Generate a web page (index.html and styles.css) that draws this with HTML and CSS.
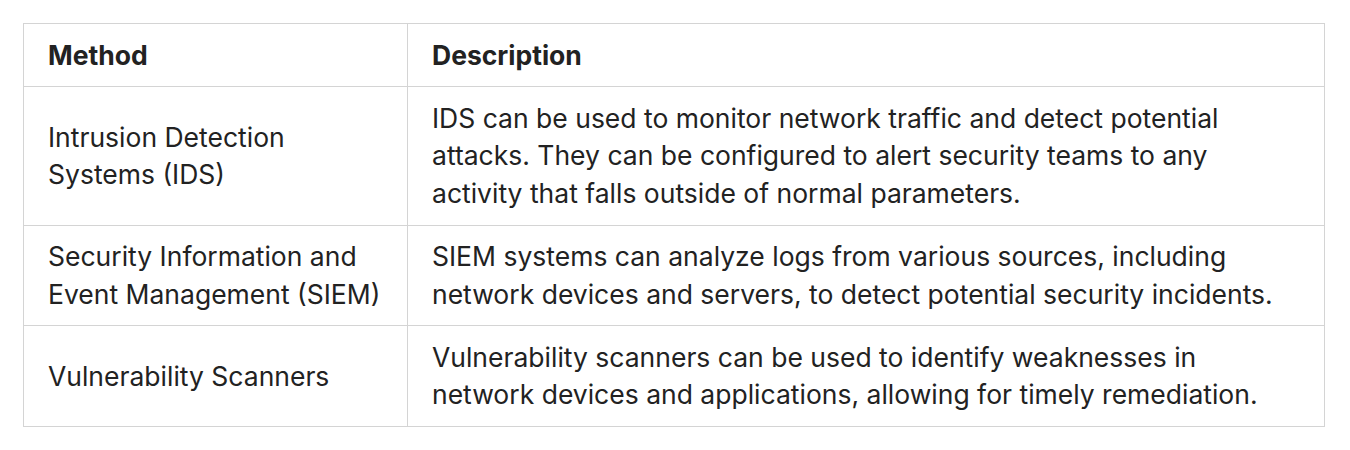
FILE: index.html
```html
<!DOCTYPE html>
<html lang="en">
<head>
<meta charset="utf-8">
<link rel="stylesheet" href="styles.css">
</head>
<body>
<div class="wrap">
<table class="tbl">
  <colgroup><col class="c1"><col class="c2"></colgroup>
  <thead>
    <tr><th>Method</th><th>Description</th></tr>
  </thead>
  <tbody>
    <tr>
      <td>Intrusion Detection Systems (IDS)</td>
      <td>IDS can be used to monitor network traffic and detect potential attacks. They can be configured to alert security teams to any activity that falls outside of normal parameters.</td>
    </tr>
    <tr>
      <td>Security Information and Event Management (SIEM)</td>
      <td>SIEM systems can analyze logs from various sources, including network devices and servers, to detect potential security incidents.</td>
    </tr>
    <tr>
      <td>Vulnerability Scanners</td>
      <td>Vulnerability scanners can be used to identify weaknesses in network devices and applications, allowing for timely remediation.</td>
    </tr>
  </tbody>
</table>
</div>
</body>
</html>
```
FILE: styles.css
```css
html, body {
  margin: 0;
  padding: 0;
  background: #ffffff;
}
.wrap {
  padding: 23px 25px 23px 23px;
}
.tbl {
  width: 100%;
  border-collapse: collapse;
  font-family: Inter, "Noto Sans", sans-serif;
  font-size: 26.5px;
  line-height: 37.4px;
  color: #222222;
  table-layout: fixed;
}
.c1 { width: 384px; }
.tbl th, .tbl td {
  border: 1px solid #d4d4d4;
  padding: 12.5px 24px;
  text-align: left;
  vertical-align: middle;
}
.tbl th {
  font-weight: 700;
}
.tbl td {
  font-weight: 400;
}
```
